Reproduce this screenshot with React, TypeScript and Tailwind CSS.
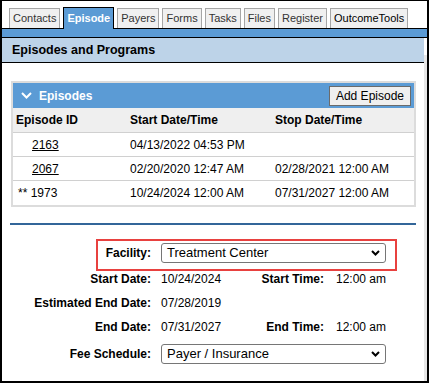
import React from "react";

const tabs = [
  { label: "Contacts" },
  { label: "Episode", active: true },
  { label: "Payers" },
  { label: "Forms" },
  { label: "Tasks" },
  { label: "Files" },
  { label: "Register" },
  { label: "OutcomeTools", dark: true },
];

const episodes = [
  { id: "2163", link: true, start: "04/13/2022 04:53 PM", stop: "" },
  { id: "2067", link: true, start: "02/20/2020 12:47 AM", stop: "02/28/2021 12:00 AM" },
  { id: "** 1973", link: false, start: "10/24/2024 12:00 AM", stop: "07/31/2027 12:00 AM" },
];

function Chevron({ className }: { className?: string }) {
  return (
    <svg width="9" height="6" viewBox="0 0 9 6" className={className}>
      <path d="M1 1 L4.5 4.5 L8 1" fill="none" stroke="currentColor" strokeWidth="2" />
    </svg>
  );
}

function FakeSelect({ value }: { value: string }) {
  return (
    <div className="flex items-center justify-between w-[225px] h-[20px] border border-[#767676] rounded-[3px] bg-white pl-[5px] pr-[5px] text-[13px] text-black">
      <span>{value}</span>
      <Chevron className="text-black" />
    </div>
  );
}

export default function App() {
  return (
    <div
      className="relative w-[429px] h-[383px] bg-white border-t border-l-2 border-r-2 border-b-2 border-black overflow-hidden"
      style={{ fontFamily: '"Liberation Sans", Arial, sans-serif' }}
    >
      {/* tab strip */}
      <div className="flex items-end h-[27px] pl-[7px] gap-[3px]">
        {tabs.map((t) =>
          t.active ? (
            <div
              key={t.label}
              className="relative z-10 -mb-px h-[22px] px-[3px] flex items-center bg-[#5b9bd5] border-t border-l border-r border-black text-[11px] font-bold text-white"
            >
              {t.label}
            </div>
          ) : (
            <div
              key={t.label}
              className={`h-[20px] px-[3px] flex items-center bg-[#f0f0f0] border-t border-l border-r border-[#a6a6a6] text-[11px] whitespace-nowrap ${
                t.dark ? "text-black" : "text-[#333]"
              }`}
            >
              {t.label}
            </div>
          )
        )}
      </div>
      <div className="h-[10px] bg-[#5b9bd5] border-t border-b border-black" />

      <div className="mr-[3px]">
        <div className="h-[25px] bg-[#bdd3e8] border-b border-black flex items-center pl-[10px] text-[12.5px] font-bold text-black">
          Episodes and Programs
        </div>

        {/* episodes panel */}
        <div className="mt-[18px] ml-[9px] mr-[8px] border-2 border-[#dcdcdc] text-[12px] text-black">
          <div className="h-[25px] bg-[#5b9bd5] flex items-center justify-between pl-[8px] pr-[3px]">
            <div className="flex items-center gap-[7px] text-white font-bold">
              <svg width="11" height="7" viewBox="0 0 11 7">
                <path d="M1 1 L5.5 5.5 L10 1" fill="none" stroke="white" strokeWidth="2" />
              </svg>
              <span>Episodes</span>
            </div>
            <button className="h-[20px] px-[6px] bg-[#efefef] border border-[#6b6b6b] text-[12px] text-black">
              Add Episode
            </button>
          </div>
          <div className="grid grid-cols-[114px_145px_1fr] h-[25px] items-center bg-[#efefef] border-b border-[#d0d0d0] pl-[3px] font-bold">
            <span>Episode ID</span>
            <span>Start Date/Time</span>
            <span>Stop Date/Time</span>
          </div>
          {episodes.map((e, i) => (
            <div
              key={e.id}
              className={`grid grid-cols-[114px_145px_1fr] h-[24px] items-center pl-[3px] ${
                i < episodes.length - 1 ? "border-b border-[#d0d0d0]" : ""
              }`}
            >
              <span className={e.link ? "pl-[16px] underline" : "pl-[2px]"}>{e.id}</span>
              <span>{e.start}</span>
              <span>{e.stop}</span>
            </div>
          ))}
        </div>

        <div className="mt-[16px] ml-[8px] mr-[8px] h-[2px] bg-[#336699]" />

        {/* episode details */}
        <div className="text-[12px] text-black whitespace-nowrap">
          <div className="mt-[14px] ml-[94px] w-[301px] h-[32px] border-2 border-[#e8413f] flex items-start pt-[2px]">
            <span className="w-[53px] text-right font-bold leading-[20px]">Facility:</span>
            <div className="ml-[10px]">
              <FakeSelect value="Treatment Center" />
            </div>
          </div>
          <div className="flex h-[16px] items-center">
            <span className="w-[149px] text-right font-bold">Start Date:</span>
            <span className="ml-[10px] w-[93px]">10/24/2024</span>
            <span className="w-[70px] text-right font-bold">Start Time:</span>
            <span className="ml-[12px]">12:00 am</span>
          </div>
          <div className="mt-[8px] flex h-[16px] items-center">
            <span className="w-[149px] text-right font-bold">Estimated End Date:</span>
            <span className="ml-[10px]">07/28/2019</span>
          </div>
          <div className="mt-[8px] flex h-[16px] items-center">
            <span className="w-[149px] text-right font-bold">End Date:</span>
            <span className="ml-[10px] w-[93px]">07/31/2027</span>
            <span className="w-[70px] text-right font-bold">End Time:</span>
            <span className="ml-[12px]">12:00 am</span>
          </div>
          <div className="mt-[9px] flex items-center">
            <span className="w-[149px] text-right font-bold">Fee Schedule:</span>
            <div className="ml-[10px]">
              <FakeSelect value="Payer / Insurance" />
            </div>
          </div>
        </div>
      </div>

      {/* scrollbar thumb */}
      <div className="absolute right-0 top-[54px] bottom-0 w-[3px] bg-[#e6e6e6]" />
    </div>
  );
}
